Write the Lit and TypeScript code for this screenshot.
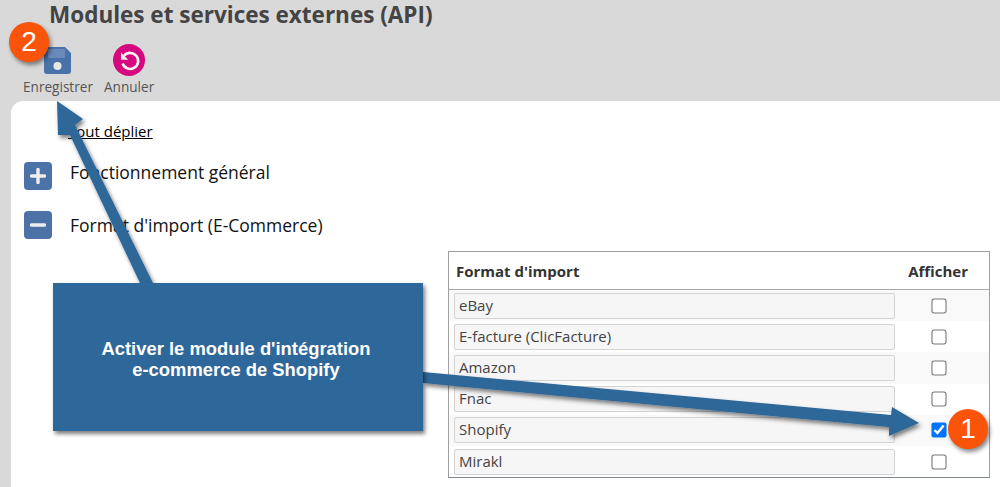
import { LitElement, html, css, svg } from "lit";
import { customElement } from "lit/decorators.js";

const rows = [
  ["eBay", false],
  ["E-facture (ClicFacture)", false],
  ["Amazon", false],
  ["Fnac", false],
  ["Shopify", true],
  ["Mirakl", false],
] as const;

@customElement("app-root")
export class AppRoot extends LitElement {
  static styles = css`
    :host {
      display: block;
      position: relative;
      width: 1000px;
      height: 487px;
      overflow: hidden;
      background: #d9d9d9;
      font-family: "Open Sans", sans-serif;
      color: #000;
    }
    .title {
      margin: 0;
      padding: 0 0 0 49px;
      height: 31px;
      font-size: 22.5px;
      line-height: 29px;
      font-weight: 700;
      color: #444;
    }
    .toolbar {
      display: flex;
      height: 70px;
      padding-left: 23px;
      gap: 11px;
      box-sizing: border-box;
    }
    .tool {
      display: flex;
      flex-direction: column;
      align-items: center;
      padding-top: 13px;
      font-size: 13.6px;
      line-height: 19px;
      color: #555;
    }
    .tool svg { display: block; width: 32px; height: 32px; margin-bottom: 1px; }
    .panel {
      margin-left: 11px;
      background: #fff;
      border-top-left-radius: 12px;
      height: 386px;
      box-sizing: border-box;
      padding: 20px 10px 0 13px;
    }
    .unfold {
      margin-left: 44px;
      font-size: 15px;
      line-height: 20px;
      color: #000;
      text-decoration: underline;
    }
    .section {
      display: flex;
      align-items: center;
      gap: 18px;
      height: 28px;
      font-size: 17.5px;
      color: #111;
    }
    .s1 { margin-top: 21px; }
    .s1 span { margin-bottom: 9px; }
    .s2 { margin-top: 21px; }
    .sign {
      width: 28px;
      height: 28px;
      border-radius: 4px;
      background: #4d72a7;
      display: flex;
      align-items: center;
      justify-content: center;
    }
    .sign svg { width: 16px; height: 16px; display: block; }
    .table {
      margin: 12px 0 0 424px;
      width: 542px;
      height: 227px;
      box-sizing: border-box;
      border: 1px solid #a0a0a0;
      border-bottom-color: #808890;
      font-size: 15px;
    }
    .head {
      display: flex;
      justify-content: space-between;
      align-items: center;
      height: 38px;
      padding: 0 21px 0 7px;
      box-sizing: border-box;
      border-bottom: 1px solid #a8a8a8;
      font-weight: 700;
      color: #333;
    }
    .row {
      display: flex;
      align-items: center;
      height: 31.2px;
      padding-left: 5px;
      box-sizing: border-box;
    }
    .row.odd { background: #f9f9f9; }
    .field {
      width: 441px;
      height: 26px;
      box-sizing: border-box;
      border: 1px solid #d4d4d4;
      border-radius: 2px;
      background: #f6f6f6;
      padding: 0 4px;
      line-height: 22px;
      color: #444;
    }
    .cell { flex: 1; display: flex; justify-content: center; margin-right: 6px; }
    .cell input { margin: 0; width: 14px; height: 14px; transform: scale(1.08); }
    .overlay { position: absolute; inset: 0; pointer-events: none; }
    .overlay svg { position: absolute; left: 0; top: 0; width: 1000px; height: 487px; }
    .callout {
      position: absolute;
      left: 53px;
      top: 283px;
      width: 370px;
      height: 148px;
      background: #2e6799;
      box-shadow: 2px 3px 4px rgba(0, 0, 0, 0.5);
      color: #fff;
      font-family: "Liberation Sans", Arial, sans-serif;
      font-weight: 700;
      font-size: 18.4px;
      line-height: 21px;
      text-align: center;
      display: flex;
      flex-direction: column;
      justify-content: center;
      padding: 3px 4px 0 0;
      box-sizing: border-box;
    }
    .badge {
      position: absolute;
      width: 40px;
      height: 40px;
      border-radius: 50%;
      background: #f9540a;
      color: #fff;
      font-family: "Liberation Sans", Arial, sans-serif;
      font-size: 28px;
      display: flex;
      align-items: center;
      justify-content: center;
      box-shadow: 2px 3px 4px rgba(0, 0, 0, 0.45);
    }
    .b1 { left: 948px; top: 409px; }
    .b2 { left: 9px; top: 22px; }
  `;

  render() {
    return html`
      <h1 class="title">Modules et services externes (API)</h1>
      <div class="toolbar">
        <div class="tool">
          <svg viewBox="0 0 32 32"><path fill="#4a72aa" d="M5 3h18l6 6v18a3 3 0 0 1-3 3H5a3 3 0 0 1-3-3V6a3 3 0 0 1 3-3z"/><rect x="6" y="5" width="17" height="9" rx="1" fill="#fff" opacity=".18"/><circle cx="15.500" cy="22" r="4" fill="#e8e8e8"/></svg>
          <span>Enregistrer</span>
        </div>
        <div class="tool">
          <svg viewBox="0 0 32 32"><circle cx="16" cy="16" r="16" fill="#d6077f"/><path d="M11.200 11.600A8 8 0 1 1 9.600 19.500" fill="none" stroke="#f4f4f4" stroke-width="2.600"/><path d="M8 8.600v7.200h7.200z" fill="#f4f4f4"/></svg>
          <span>Annuler</span>
        </div>
      </div>
      <div class="panel">
        <div class="unfold">Tout déplier</div>
        <div class="section s1">
          <div class="sign"><svg viewBox="0 0 16 16"><path d="M8 1.500v13M1.500 8h13" stroke="#eee" stroke-width="3.400" stroke-linecap="round"/></svg></div>
          <span>Fonctionnement général</span>
        </div>
        <div class="section s2">
          <div class="sign"><svg viewBox="0 0 16 16"><path d="M1.500 8h13" stroke="#eee" stroke-width="3.400" stroke-linecap="round"/></svg></div>
          <span>Format d'import (E-Commerce)</span>
        </div>
        <div class="table">
          <div class="head"><span>Format d'import</span><span>Afficher</span></div>
          ${rows.map(
            ([name, on], i) => html`
              <div class="row ${i % 2 === 0 ? "odd" : ""}">
                <div class="field">${name}</div>
                <div class="cell"><input type="checkbox" .checked=${on} /></div>
              </div>
            `
          )}
        </div>
      </div>
      <div class="overlay">
        <svg viewBox="0 0 1000 487">
          <defs>
            <filter id="sh" x="-10%" y="-10%" width="120%" height="120%">
              <feDropShadow dx="2" dy="3" stdDeviation="2" flood-color="#000" flood-opacity=".5"/>
            </filter>
          </defs>
          ${svg`<path filter="url(#sh)" fill="#2e6799" d="M57 101L83 119L75 125L153 283L140 283L70 135L58 135Z"/>`}
          ${svg`<path filter="url(#sh)" fill="#2e6799" d="M423 372L891 415L892 407L919 423L889 436L889 427L423 383Z"/>`}
        </svg>
        <div class="callout"><span>Activer le module d'intégration</span><span>e-commerce de Shopify</span></div>
        <div class="badge b1">1</div>
        <div class="badge b2">2</div>
      </div>
    `;
  }
}
